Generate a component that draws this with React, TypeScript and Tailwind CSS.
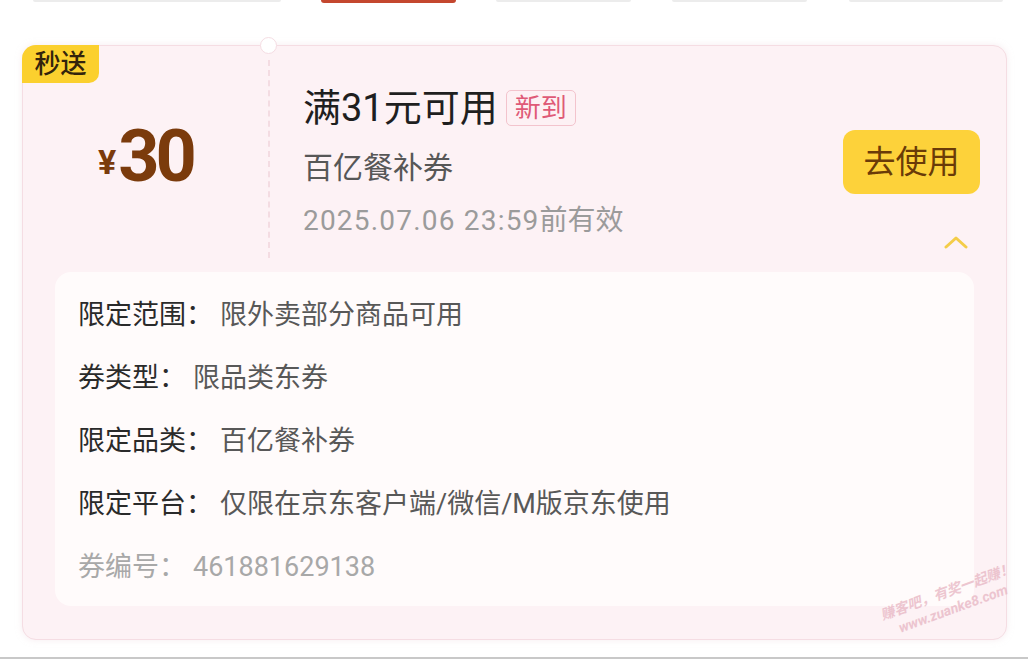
const rows = [
  { label: "限定范围：", value: "限外卖部分商品可用" },
  { label: "券类型：", value: "限品类东券" },
  { label: "限定品类：", value: "百亿餐补券" },
  { label: "限定平台：", value: "仅限在京东客户端/微信/M版京东使用" },
];

const TabStrip = () => (
  <div className="flex h-[4px] items-start">
    <div className="ml-[33px] h-[2px] w-[248px] rounded-b bg-[#ececec]" />
    <div className="ml-[40px] h-[3px] w-[135px] rounded-b bg-[#c4472f]" />
    <div className="ml-[40px] h-[2px] w-[135px] rounded-b bg-[#ececec]" />
    <div className="ml-[41px] h-[2px] w-[135px] rounded-b bg-[#ececec]" />
    <div className="ml-[42px] h-[2px] w-[154px] rounded-b bg-[#ececec]" />
  </div>
);

const App = () => {
  return (
    <div
      className="relative h-[659px] w-[1028px] overflow-hidden bg-white"
      style={{ fontFamily: 'Roboto, "Noto Sans CJK SC", sans-serif' }}
    >
      <TabStrip />
      <div className="relative ml-[22px] mt-[41px] flex h-[595px] w-[985px] flex-col rounded-[14px] border border-[#f5dde3] bg-[#fdf2f5] shadow-[0_0_6px_rgba(240,220,225,0.5)]">
        {/* badge + notch */}
        <div className="absolute -left-px -top-px flex h-[38px] w-[77px] items-center justify-center rounded-tl-[14px] rounded-br-[10px] bg-[#fbd02e] text-[26px] font-medium leading-none text-[#33240c]">
          秒送
        </div>
        <div className="absolute left-[237px] top-[-9px] h-[17px] w-[17px] rounded-full border border-[#f5dde3] bg-white" />

        <div className="flex h-[226px]">
          <div className="flex w-[245px] items-center justify-center pb-[4px] text-[#7b3b0c]">
            <span className="mt-[10px] text-[34px] font-bold leading-none">¥</span>
            <span className="ml-[2px] text-[72px] font-bold leading-none tracking-[-4px]">30</span>
          </div>
          <div className="my-[14px] border-l-2 border-dashed border-[#f4dce2]" />
          <div className="flex flex-1 justify-between pl-[33px]">
            <div className="pt-[39px]">
              <div className="flex items-center">
                <span className="text-[38px] leading-[46px] text-[#1f1f1f]">满31元可用</span>
                <span className="ml-[8px] flex h-[36px] items-center rounded-[5px] border border-[#f3c4cd] bg-[#fdf1f4] px-[8px] text-[26px] leading-none text-[#df5a77]">
                  新到
                </span>
              </div>
              <div className="mt-[18px] text-[30px] leading-[38px] text-[#575757]">百亿餐补券</div>
              <div className="mt-[16px] text-[28px] leading-[36px] text-[#9b9b9b]">
                <span className="tracking-[1.2px]">2025.07.06 23:59</span>前有效
              </div>
            </div>
            <div className="flex flex-col items-end pr-[26px] pt-[84px]">
              <button className="flex h-[64px] w-[137px] items-center justify-center rounded-[12px] bg-[#fdd23a] text-[32px] text-[#6a3b08]">
                去使用
              </button>
              <svg
                className="mr-[12px] mt-[41px]"
                width="24"
                height="14"
                viewBox="0 0 24 14"
                fill="none"
              >
                <path d="M2 12 L12 3 L22 12" stroke="#f4cd48" strokeWidth="3" strokeLinecap="round" strokeLinejoin="round" />
              </svg>
            </div>
          </div>
        </div>

        <div className="mx-[32px] h-[334px] rounded-[16px] bg-[#fffbfb] pl-[23px] pt-[12px]">
          {rows.map((r) => (
            <div key={r.label} className="flex h-[63px] items-center text-[27px] leading-none">
              <span className="text-[#2a2a2a]">{r.label}</span>
              <span className="ml-[7px] text-[#585858]">{r.value}</span>
            </div>
          ))}
          <div className="flex h-[63px] items-center text-[27px] leading-none text-[#a8a8a8]">
            <span>券编号：</span>
            <span className="ml-[7px]">461881629138</span>
          </div>
        </div>
      </div>

      {/* watermark */}
      <div className="pointer-events-none absolute left-[880px] top-[582px] -rotate-[20deg] whitespace-pre-line text-center text-[14px] font-bold italic leading-[18px] text-[#e9b9c6] opacity-80">
        {"赚客吧，有奖一起赚！\nwww.zuanke8.com"}
      </div>

      <div className="absolute bottom-0 left-0 h-[2px] w-full bg-[#c8c8c8]" />
    </div>
  );
};

export default App;
